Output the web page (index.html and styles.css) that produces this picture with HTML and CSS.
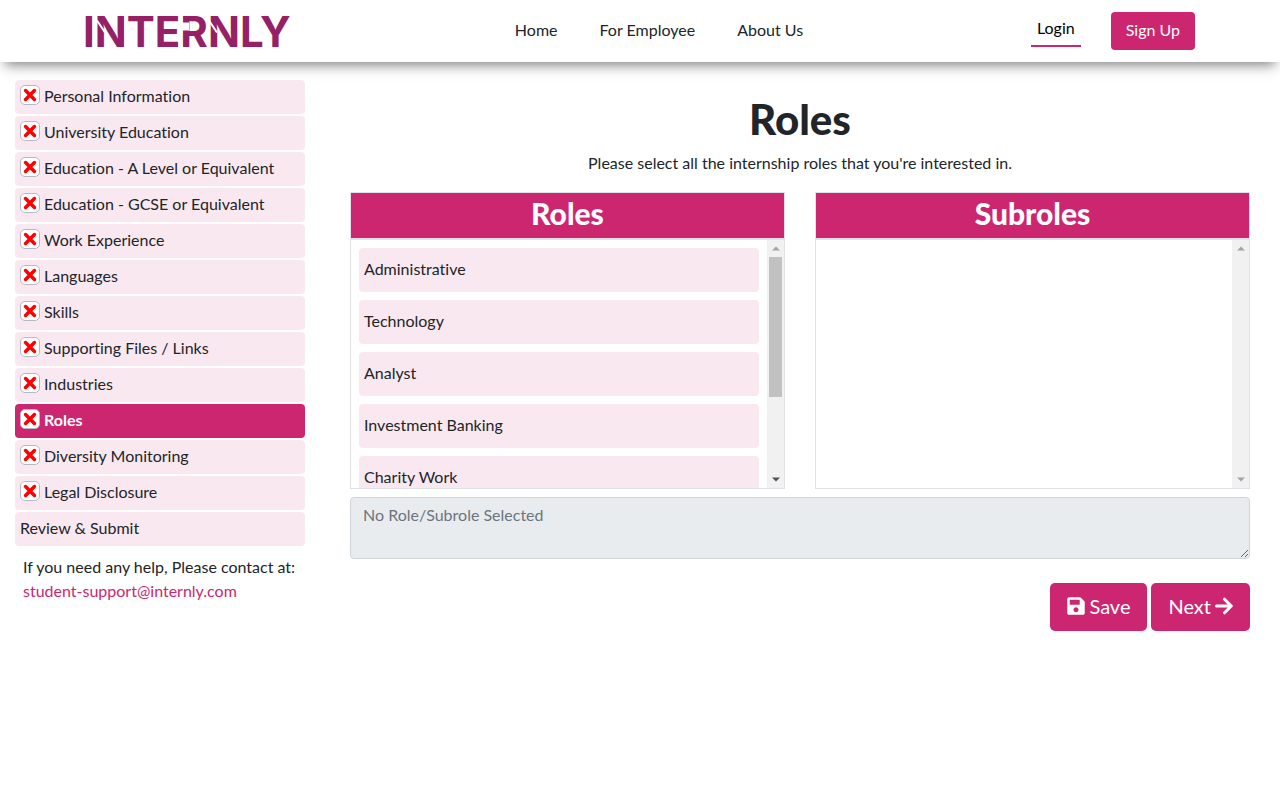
FILE: index.html
```html
<!DOCTYPE html>
<html lang="en">
<head>
<meta charset="utf-8">
<meta name="viewport" content="width=device-width, initial-scale=1">
<title>Internly - Roles</title>
<link rel="stylesheet" href="styles.css">
</head>
<body>
<svg class="defs" width="0" height="0" aria-hidden="true">
  <symbol id="cross" viewBox="0 0 12 12"><path d="M2.200 2.200 9.800 9.800M9.800 2.200 2.200 9.800" stroke="#f00" stroke-width="3" stroke-linecap="round"/></symbol>
  <symbol id="arrow-up" viewBox="0 0 8 4"><path d="M4 0 8 4H0z"/></symbol>
  <symbol id="arrow-down" viewBox="0 0 8 4"><path d="M4 4 8 0H0z"/></symbol>
</svg>
<header class="header">
  <div class="header-inner">
    <a class="logo" href="#" aria-label="Internly">
      <svg viewBox="0 0 220 38" width="220" height="38">
        <text class="wordmark" x="-2" y="35">INTERNLY</text>
        <path d="M12 8.500 20 20.500M124 8.500 132 20.500" stroke="#fff" stroke-width="2"/>
        <path d="M97 10.500H104V18.500H97z" fill="#fff"/>
      </svg>
    </a>
    <nav class="nav">
      <a href="#">Home</a>
      <a href="#">For Employee</a>
      <a href="#">About Us</a>
    </nav>
    <div class="account">
      <a class="login" href="#">Login</a>
      <button class="btn signup" type="button">Sign Up</button>
    </div>
  </div>
</header>
<div class="layout">
  <aside class="sidebar">
    <nav class="steps">
      <a href="#"><span class="status"><svg><use href="#cross"/></svg></span>Personal Information</a>
      <a href="#"><span class="status"><svg><use href="#cross"/></svg></span>University Education</a>
      <a href="#"><span class="status"><svg><use href="#cross"/></svg></span>Education - A Level or Equivalent</a>
      <a href="#"><span class="status"><svg><use href="#cross"/></svg></span>Education - GCSE or Equivalent</a>
      <a href="#"><span class="status"><svg><use href="#cross"/></svg></span>Work Experience</a>
      <a href="#"><span class="status"><svg><use href="#cross"/></svg></span>Languages</a>
      <a href="#"><span class="status"><svg><use href="#cross"/></svg></span>Skills</a>
      <a href="#"><span class="status"><svg><use href="#cross"/></svg></span>Supporting Files / Links</a>
      <a href="#"><span class="status"><svg><use href="#cross"/></svg></span>Industries</a>
      <a class="active" href="#"><span class="status"><svg><use href="#cross"/></svg></span>Roles</a>
      <a href="#"><span class="status"><svg><use href="#cross"/></svg></span>Diversity Monitoring</a>
      <a href="#"><span class="status"><svg><use href="#cross"/></svg></span>Legal Disclosure</a>
      <a href="#">Review &amp; Submit</a>
    </nav>
    <p class="help">If you need any help, Please contact at:<br><a href="#">student-support@internly.com</a></p>
  </aside>
  <main class="main">
    <h1>Roles</h1>
    <p class="intro">Please select all the internship roles that you're interested in.</p>
    <div class="panels">
      <section class="panel">
        <h2>Roles</h2>
        <div class="panel-body">
          <ul class="options">
            <li>Administrative</li>
            <li>Technology</li>
            <li>Analyst</li>
            <li>Investment Banking</li>
            <li>Charity Work</li>
          </ul>
          <div class="scrollbar" aria-hidden="true">
            <svg class="arrow"><use href="#arrow-up"/></svg>
            <span class="thumb"></span>
            <svg class="arrow enabled"><use href="#arrow-down"/></svg>
          </div>
        </div>
      </section>
      <section class="panel">
        <h2>Subroles</h2>
        <div class="panel-body">
          <ul class="options"></ul>
          <div class="scrollbar" aria-hidden="true">
            <svg class="arrow"><use href="#arrow-up"/></svg>
            <svg class="arrow"><use href="#arrow-down"/></svg>
          </div>
        </div>
      </section>
    </div>
    <textarea class="selection" rows="2" placeholder="No Role/Subrole Selected" aria-label="Selected roles" disabled></textarea>
    <div class="actions">
      <button class="btn large" type="button"><svg width="18" height="20" viewBox="0 0 448 512"><path fill="currentColor" d="M433.900 129.900l-83.900-83.900A48 48 0 0 0 316.100 32H48C21.500 32 0 53.500 0 80v352c0 26.500 21.500 48 48 48h352c26.500 0 48-21.500 48-48V163.900a48 48 0 0 0-14.100-34zM224 416c-35.300 0-64-28.700-64-64s28.700-64 64-64 64 28.700 64 64-28.700 64-64 64zm96-304.500V212c0 6.600-5.400 12-12 12H76c-6.600 0-12-5.400-12-12V108c0-6.600 5.400-12 12-12h228.500c3.200 0 6.200 1.300 8.500 3.500l3.500 3.500a12 12 0 0 1 3.500 8.500z"/></svg>Save</button>
      <button class="btn large" type="button">Next<svg width="18" height="20" viewBox="0 0 18 20"><path fill="none" stroke="currentColor" stroke-width="3" stroke-linecap="round" stroke-linejoin="round" d="M1.500 10H16M9.500 3.200 16.300 10 9.500 16.800"/></svg></button>
    </div>
  </main>
</div>
</body>
</html>
```
FILE: styles.css
```css
*, *::before, *::after { box-sizing: border-box; }
body {
  margin: 0;
  font: 16px/24px Lato, "Open Sans", sans-serif;
  font-variant-ligatures: none;
  color: #212529;
  background: #fff;
}
a { color: inherit; text-decoration: none; }
h1, h2, p, ul { margin: 0; padding: 0; }
.defs { position: absolute; }

.header { box-shadow: 0 8px 12px -5px rgba(0, 0, 0, .5); }
.header-inner {
  display: flex;
  justify-content: space-between;
  align-items: center;
  max-width: 1140px;
  margin: 0 auto;
  padding: 12px 15px;
}
.logo svg { display: block; overflow: visible; }
.wordmark { font: 700 42px Inter, sans-serif; fill: #952065; }
.nav { display: flex; gap: 42px; padding: 0 18px 2px 0; }
.account { display: flex; justify-content: flex-end; align-items: center; gap: 30px; }
.login { padding: 0 6px 5px; border-bottom: 2px solid #cd2671; color: #000; }
.btn {
  display: inline-flex;
  align-items: center;
  gap: 4px;
  border: 0;
  border-radius: 4px;
  background: #cd2671;
  color: #fff;
  font: inherit;
}
.signup { padding: 6px 15px 8px; }

.layout { display: grid; grid-template-columns: 1fr 3fr; }
.sidebar { min-width: 0; padding: 18px 15px; }
.steps { display: grid; gap: 2px; }
.steps a {
  display: flex;
  gap: 4px;
  padding: 4px 5px 6px;
  border-radius: 4px;
  background: #fae8f0;
}
.steps .active { background: #cd2671; color: #fff; font-weight: bold; }
.status {
  display: flex;
  align-items: center;
  justify-content: center;
  width: 20px;
  height: 20px;
  margin-top: 1px;
  border: 1px solid #b8b8c4;
  border-radius: 5px;
  background: #fff;
}
.status svg { width: 14px; height: 14px; }
.help { padding: 9px 0 0 8px; white-space: nowrap; }
.help a { color: #cd2671; }

.main { min-width: 0; padding: 33px 30px; }
h1 { font-size: 42px; line-height: 48px; font-weight: 900; text-align: center; }
.intro { margin: 8px 0 17px; text-align: center; }
.panels { display: grid; grid-template-columns: 1fr 1fr; gap: 30px; }
.panel { border: 1px solid #dee2e6; }
.panel h2 {
  padding: 3px 12px 8px;
  border-bottom: 2px solid #dee2e6;
  background: #cd2671;
  background-clip: padding-box;
  color: #fff;
  font-size: 30px;
  line-height: 34px;
  font-weight: 900;
  text-align: center;
}
.panel-body { display: flex; height: 248px; overflow: hidden; }
.options {
  flex: 1;
  display: grid;
  align-content: start;
  gap: 8px;
  padding: 8px;
  list-style: none;
}
.options li { padding: 9px 5px 11px; border-radius: 4px; background: #fae8f0; }
.scrollbar {
  display: flex;
  flex-direction: column;
  width: 17px;
  padding: 0 2px;
  background: #f1f1f1;
}
.arrow { width: 8px; height: 17px; margin: 0 auto; fill: #a3a3a3; }
.arrow:last-child { margin-top: auto; }
.arrow.enabled { fill: #505050; }
.thumb { height: 140px; background: #c1c1c1; }

.selection {
  display: block;
  width: 100%;
  height: 62px;
  margin: 8px 0 24px;
  padding: 5px 12px;
  border: 1px solid #ced4da;
  border-radius: 4px;
  background: #e9ecef;
  font: inherit;
  resize: vertical;
}
.selection::placeholder { color: #6c757d; }
.actions { display: flex; justify-content: flex-end; gap: 4px; }
.large { padding: 8px 17px 10px; border-radius: 5px; font-size: 20px; line-height: 30px; }
```
